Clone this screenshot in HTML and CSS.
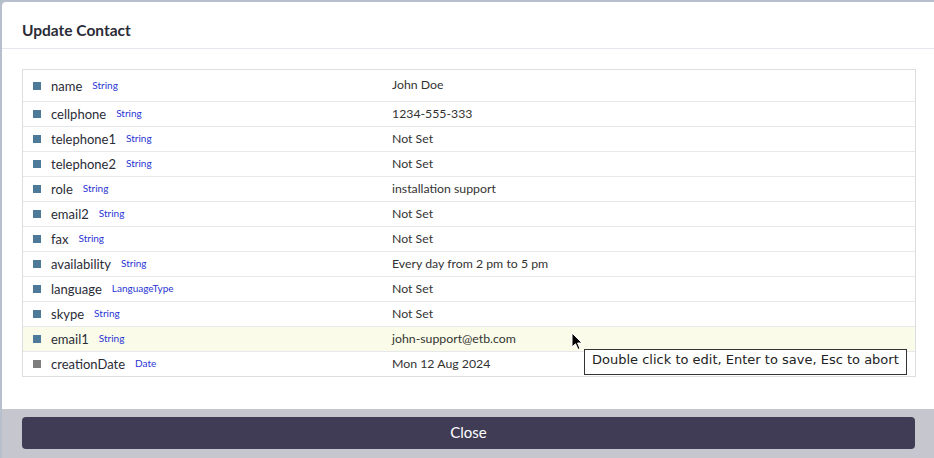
FILE: index.html
```html
<!DOCTYPE html>
<html>
<head>
<meta charset="utf-8">
<link rel="stylesheet" href="styles.css">
</head>
<body>
<div class="modal">
  <div class="modal-header">Update Contact</div>
  <div class="modal-body">
    <div class="table">
      <div class="row first"><div class="key"><span class="sq"></span><span class="name">name</span><span class="type">String</span></div><div class="val">John Doe</div></div>
      <div class="row"><div class="key"><span class="sq"></span><span class="name">cellphone</span><span class="type">String</span></div><div class="val">1234-555-333</div></div>
      <div class="row"><div class="key"><span class="sq"></span><span class="name">telephone1</span><span class="type">String</span></div><div class="val">Not Set</div></div>
      <div class="row"><div class="key"><span class="sq"></span><span class="name">telephone2</span><span class="type">String</span></div><div class="val">Not Set</div></div>
      <div class="row"><div class="key"><span class="sq"></span><span class="name">role</span><span class="type">String</span></div><div class="val">installation support</div></div>
      <div class="row"><div class="key"><span class="sq"></span><span class="name">email2</span><span class="type">String</span></div><div class="val">Not Set</div></div>
      <div class="row"><div class="key"><span class="sq"></span><span class="name">fax</span><span class="type">String</span></div><div class="val">Not Set</div></div>
      <div class="row"><div class="key"><span class="sq"></span><span class="name">availability</span><span class="type">String</span></div><div class="val">Every day from 2 pm to 5 pm</div></div>
      <div class="row"><div class="key"><span class="sq"></span><span class="name">language</span><span class="type">LanguageType</span></div><div class="val">Not Set</div></div>
      <div class="row"><div class="key"><span class="sq"></span><span class="name">skype</span><span class="type">String</span></div><div class="val">Not Set</div></div>
      <div class="row hover"><div class="key"><span class="sq"></span><span class="name">email1</span><span class="type">String</span></div><div class="val">john-support@etb.com</div></div>
      <div class="row"><div class="key"><span class="sq gray"></span><span class="name">creationDate</span><span class="type">Date</span></div><div class="val">Mon 12 Aug 2024</div></div>
    </div>
  </div>
  <div class="modal-footer"><button class="close-btn">Close</button></div>
  <svg class="cursor" width="14" height="20" viewBox="0 0 14 20"><path d="M1 1 L1 15 L4.5 11.8 L7 17.5 L9 16.6 L6.6 11 L11 11 Z" fill="#000" stroke="#fff" stroke-width="1"/></svg>
  <div class="tooltip">Double click to edit, Enter to save, Esc to abort</div>
</div>
</body>
</html>
```

FILE: styles.css
```css
html, body {
  margin: 0;
  padding: 0;
  width: 934px;
  height: 458px;
  overflow: hidden;
  background: #b7bfcc;
  font-family: "Lato", "Open Sans", sans-serif;
}
.modal {
  position: absolute;
  left: 2px;
  top: 2px;
  right: 0;
  bottom: 0;
  background: #fff;
  border-top-left-radius: 4px;
  display: flex;
  flex-direction: column;
}
.modal-header {
  height: 47px;
  box-sizing: border-box;
  padding: 19px 0 0 20px;
  font-size: 15.5px;
  font-weight: 700;
  color: #2a2c38;
  border-bottom: 1px solid #e4e7ee;
}
.modal-body {
  flex: 1;
  padding: 20px 18px 0 20px;
}
.table {
  border: 1px solid #dcdde0;
}
.row {
  display: flex;
  align-items: center;
  height: 24px;
  border-top: 1px solid #e6e8ec;
  font-size: 12.3px;
  color: #333;
}
.row.first {
  border-top: none;
  height: 31px;
}
.row.hover {
  background: #fafce9;
}
.key {
  width: 369px;
  display: flex;
  align-items: center;
  padding-left: 10px;
  box-sizing: border-box;
}
.sq {
  width: 8px;
  height: 8px;
  background: #4d7a98;
  margin-right: 10px;
}
.sq.gray {
  background: #7d7d7d;
}
.name {
  font-size: 13px;
  color: #2a2c36;
  margin-right: 10px;
}
.type {
  font-size: 10px;
  color: #2a35d4;
  position: relative;
  top: -1px;
}
.val {
  color: #333;
  position: relative;
  top: -1px;
}
.modal-footer {
  height: 49px;
  box-sizing: border-box;
  background: #c6c6cf;
  padding: 8px 19px 0 20px;
}
.close-btn {
  width: 100%;
  height: 32px;
  border: none;
  border-radius: 4px;
  background: #403c56;
  color: #fff;
  font-family: "Lato", "Open Sans", sans-serif;
  font-size: 15px;
  padding: 0 0 3px 0;
}
.cursor {
  position: absolute;
  left: 569px;
  top: 330px;
}
.tooltip {
  position: absolute;
  left: 582px;
  top: 347px;
  height: 26px;
  box-sizing: border-box;
  border: 1px solid #333;
  background: #fff;
  padding: 2px 7px 0 7px;
  font-family: "DejaVu Sans", sans-serif;
  font-size: 13px;
  color: #222;
  white-space: nowrap;
}
```
